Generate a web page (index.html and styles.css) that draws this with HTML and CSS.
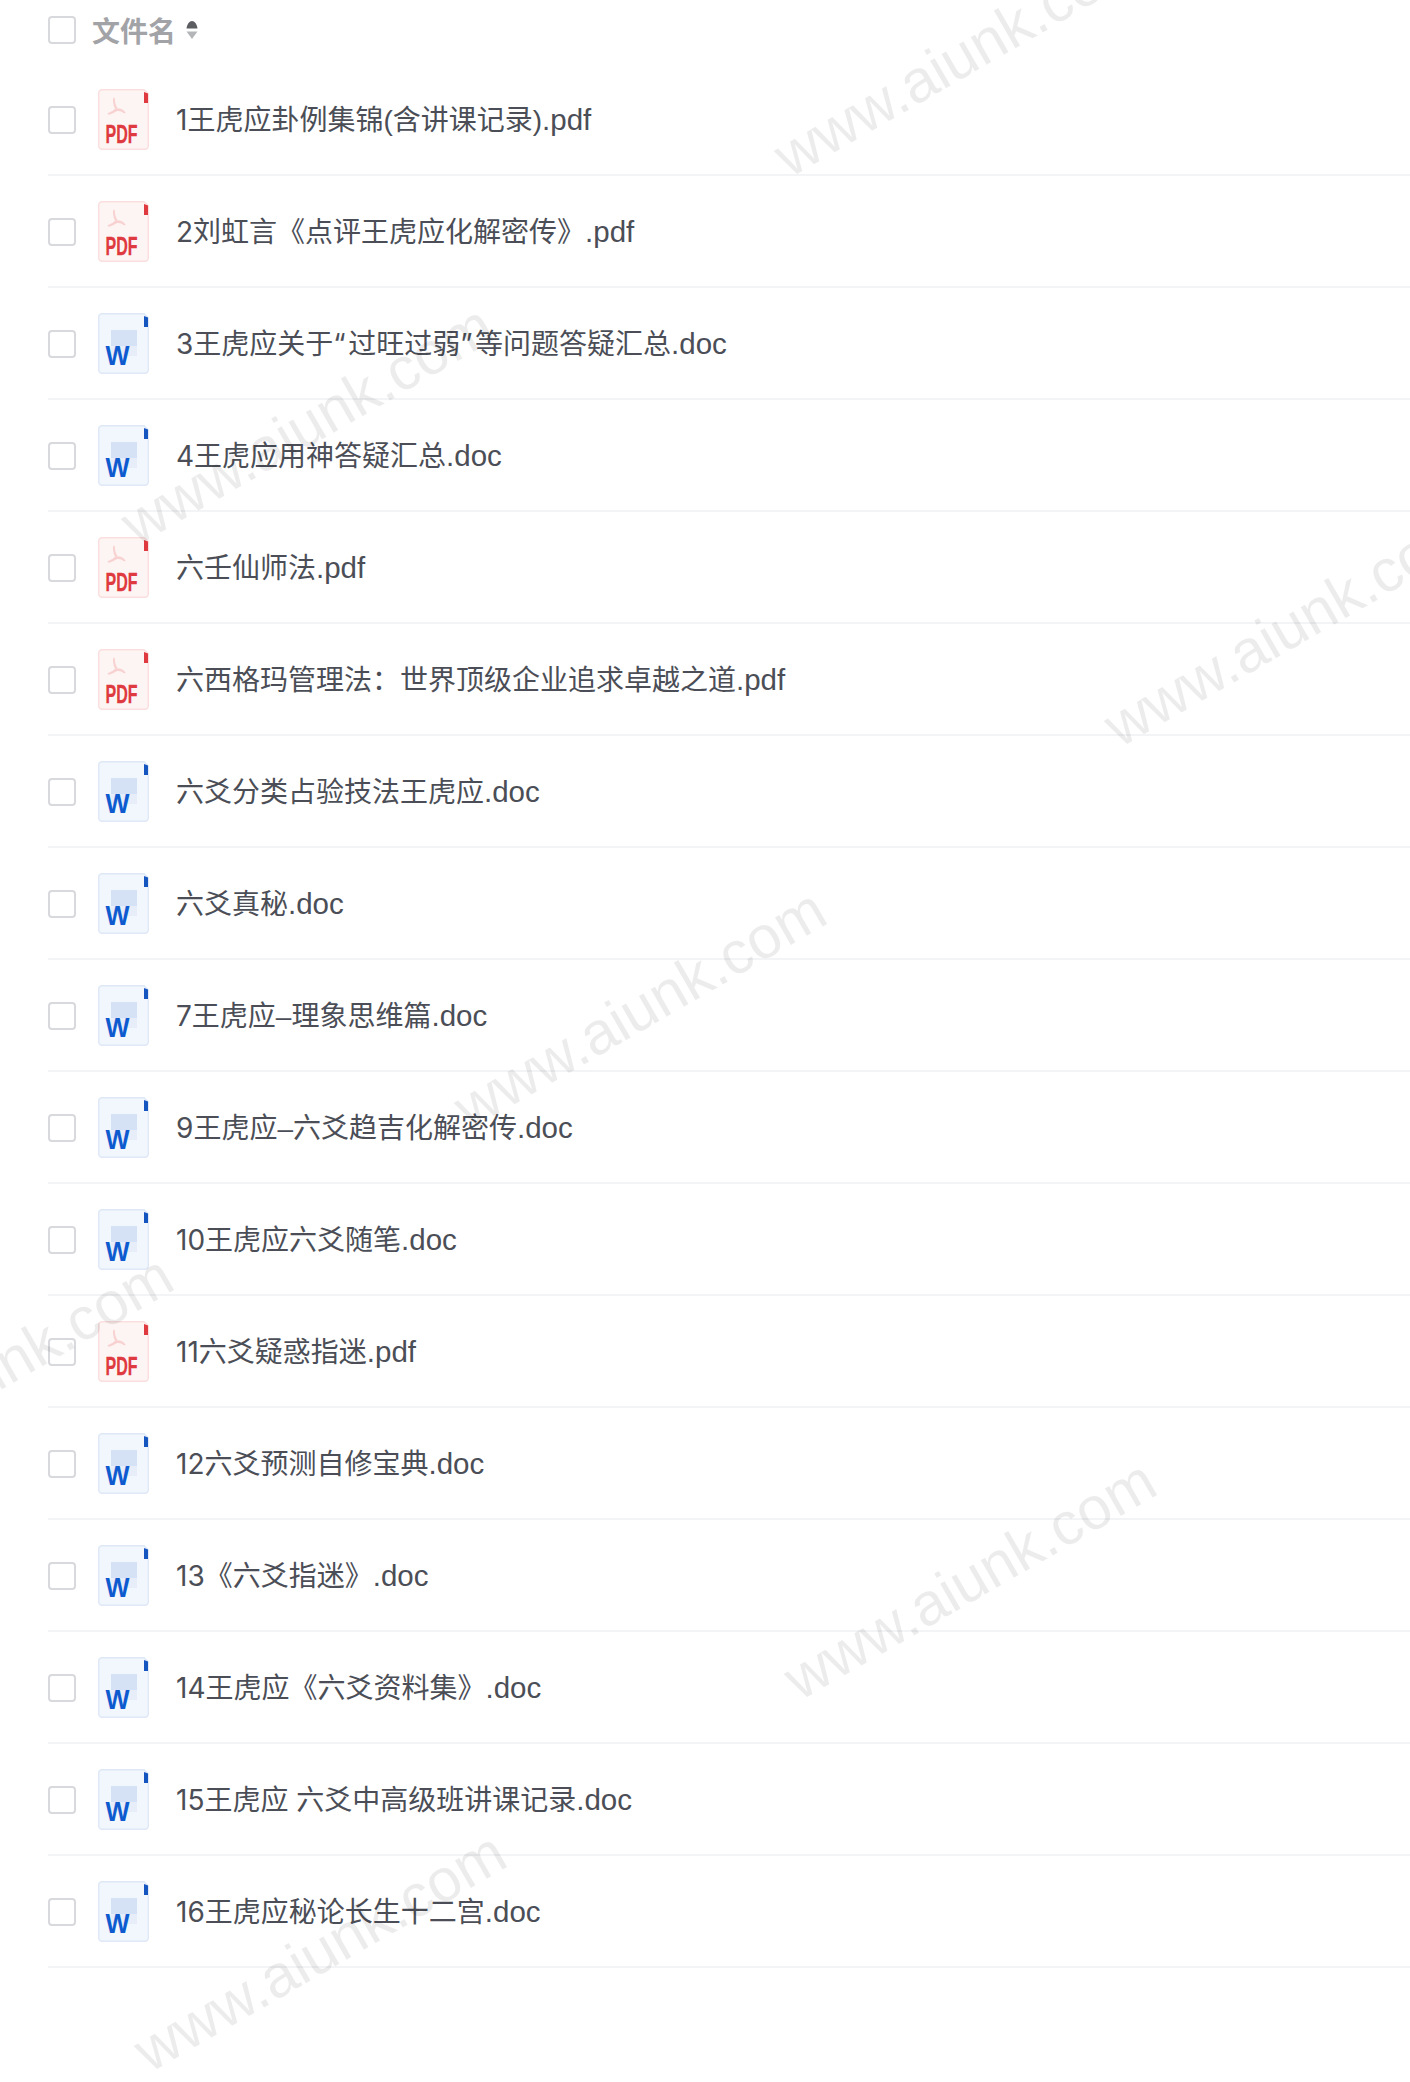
FILE: index.html

```html
<!DOCTYPE html>
<html lang="zh-CN">
<head>
  <meta charset="UTF-8" />
  <title>文件列表</title>
  <link rel="stylesheet" href="styles.css">
</head>
<body>
  <svg class="defs" width="0" height="0">
    <symbol id="icon-pdf" viewBox="0 0 51 61">
      <path d="M4 .7h42l4.300 4V57a3.300 3.300 0 0 1-3.300 3.300H4A3.300 3.300 0 0 1 .7 57V4A3.300 3.300 0 0 1 4 .7z" fill="#fdf4f4" stroke="#fbdedd" stroke-width="1.400"/>
      <path d="M46 3l4 1.500v9.500h-4z" fill="#df3a40"/>
      <path d="M16 9c-1 5 1 9 2 11-2 2-5 4-8 5 3 0 6-2 9-4 3 0 6 1 8 3-2-3-5-4-8-4-2-3-3-7-3-11z" fill="none" stroke="#f8d2d1" stroke-width="1.600"/>
      <text class="icon-pdf-text" x="23.500" y="54" textLength="32" lengthAdjust="spacingAndGlyphs" text-anchor="middle">PDF</text>
    </symbol>
    <symbol id="icon-doc" viewBox="0 0 51 61">
      <path d="M4 .7h42l4.300 4V57a3.300 3.300 0 0 1-3.300 3.300H4A3.300 3.300 0 0 1 .7 57V4A3.300 3.300 0 0 1 4 .7z" fill="#f2f6fd" stroke="#dfe8f6" stroke-width="1.400"/>
      <path d="M46 3l4 1.500v9.500h-4z" fill="#1455c0"/>
      <rect x="13" y="17" width="26" height="16" fill="#d5e1f5"/>
      <rect x="13" y="33" width="26" height="10" fill="#e8eef9"/>
      <text class="icon-doc-text" x="19.500" y="52" textLength="24" lengthAdjust="spacingAndGlyphs" text-anchor="middle">W</text>
    </symbol>
  </svg>

  <div class="list-head">
    <span class="check"></span>
    <span class="head-name">文件名</span>
    <svg class="sort" width="12" height="20" viewBox="0 0 12 20">
      <path d="M6 1C3.500 1 1 4 .5 8.500h11C11 4 8.500 1 6 1z" fill="#5c5d61"/>
      <path d="M.5 11.500h11L6 19z" fill="#b4b5b8"/>
    </svg>
  </div>

  <ul class="file-list">
    <li class="file-row"><span class="check"></span><svg class="file-icon"><use href="#icon-pdf"/></svg><span class="file-name"><span class="num">1</span>王虎应卦例集锦(含讲课记录)<span class="ext">.pdf</span></span></li>
    <li class="file-row"><span class="check"></span><svg class="file-icon"><use href="#icon-pdf"/></svg><span class="file-name"><span class="num">2</span>刘虹言《点评王虎应化解密传》<span class="ext">.pdf</span></span></li>
    <li class="file-row"><span class="check"></span><svg class="file-icon"><use href="#icon-doc"/></svg><span class="file-name"><span class="num">3</span>王虎应关于<span class="quote">“</span>过旺过弱<span class="quote">”</span>等问题答疑汇总<span class="ext">.doc</span></span></li>
    <li class="file-row"><span class="check"></span><svg class="file-icon"><use href="#icon-doc"/></svg><span class="file-name"><span class="num">4</span>王虎应用神答疑汇总<span class="ext">.doc</span></span></li>
    <li class="file-row"><span class="check"></span><svg class="file-icon"><use href="#icon-pdf"/></svg><span class="file-name">六壬仙师法<span class="ext">.pdf</span></span></li>
    <li class="file-row"><span class="check"></span><svg class="file-icon"><use href="#icon-pdf"/></svg><span class="file-name">六西格玛管理法：世界顶级企业追求卓越之道<span class="ext">.pdf</span></span></li>
    <li class="file-row"><span class="check"></span><svg class="file-icon"><use href="#icon-doc"/></svg><span class="file-name">六爻分类占验技法王虎应<span class="ext">.doc</span></span></li>
    <li class="file-row"><span class="check"></span><svg class="file-icon"><use href="#icon-doc"/></svg><span class="file-name">六爻真秘<span class="ext">.doc</span></span></li>
    <li class="file-row"><span class="check"></span><svg class="file-icon"><use href="#icon-doc"/></svg><span class="file-name"><span class="num">7</span>王虎应–理象思维篇<span class="ext">.doc</span></span></li>
    <li class="file-row"><span class="check"></span><svg class="file-icon"><use href="#icon-doc"/></svg><span class="file-name"><span class="num">9</span>王虎应–六爻趋吉化解密传<span class="ext">.doc</span></span></li>
    <li class="file-row"><span class="check"></span><svg class="file-icon"><use href="#icon-doc"/></svg><span class="file-name"><span class="num">10</span>王虎应六爻随笔<span class="ext">.doc</span></span></li>
    <li class="file-row"><span class="check"></span><svg class="file-icon"><use href="#icon-pdf"/></svg><span class="file-name"><span class="num">11</span>六爻疑惑指迷<span class="ext">.pdf</span></span></li>
    <li class="file-row"><span class="check"></span><svg class="file-icon"><use href="#icon-doc"/></svg><span class="file-name"><span class="num">12</span>六爻预测自修宝典<span class="ext">.doc</span></span></li>
    <li class="file-row"><span class="check"></span><svg class="file-icon"><use href="#icon-doc"/></svg><span class="file-name"><span class="num">13</span>《六爻指迷》<span class="ext">.doc</span></span></li>
    <li class="file-row"><span class="check"></span><svg class="file-icon"><use href="#icon-doc"/></svg><span class="file-name"><span class="num">14</span>王虎应《六爻资料集》<span class="ext">.doc</span></span></li>
    <li class="file-row"><span class="check"></span><svg class="file-icon"><use href="#icon-doc"/></svg><span class="file-name"><span class="num">15</span>王虎应 六爻中高级班讲课记录<span class="ext">.doc</span></span></li>
    <li class="file-row"><span class="check"></span><svg class="file-icon"><use href="#icon-doc"/></svg><span class="file-name"><span class="num">16</span>王虎应秘论长生十二宫<span class="ext">.doc</span></span></li>
  </ul>

  <div class="marks">
    <span class="mark m1">www.aiunk.com</span>
    <span class="mark m2">www.aiunk.com</span>
    <span class="mark m3">www.aiunk.com</span>
    <span class="mark m4">www.aiunk.com</span>
    <span class="mark m5">www.aiunk.com</span>
    <span class="mark m6">www.aiunk.com</span>
    <span class="mark m7">www.aiunk.com</span>
  </div>
</body>
</html>
```

FILE: styles.css

```css
html, body {
  margin: 0;
  padding: 0;
  background: #fff;
  font-family: "Liberation Sans", "Noto Sans CJK SC", sans-serif;
}
body {
  position: relative;
  width: 1410px;
  height: 2082px;
  overflow: hidden;
}
.defs {
  position: absolute;
}
.check {
  box-sizing: border-box;
  flex: none;
  width: 28px;
  height: 28px;
  border: 2px solid #d8d9dc;
  border-radius: 4px;
  background: #fff;
}
.list-head {
  display: flex;
  align-items: center;
  height: 60px;
  padding-left: 48px;
}
.head-name {
  margin-left: 16px;
  font-size: 28px;
  font-weight: 700;
  color: #a2a3a7;
}
.sort {
  margin-left: 10px;
}
.file-list {
  margin: 4px 0 0 48px;
  padding: 0;
  list-style: none;
}
.file-row {
  box-sizing: border-box;
  display: flex;
  align-items: center;
  height: 112px;
  border-bottom: 2px solid #f3f4f6;
}
.file-row .check {
  margin-top: 2px;
}
.file-icon {
  flex: none;
  width: 51px;
  height: 61px;
  margin-left: 22px;
}
.file-name {
  margin: 3px 0 0 27px;
  font-size: 28px;
  line-height: 40px;
  color: #4b4e56;
  white-space: pre;
}
.num {
  font-family: Inter, sans-serif;
}
.ext {
  font-size: 29.500px;
}
.quote {
  font-family: Inter, sans-serif;
  letter-spacing: 2.500px;
}
.icon-pdf-text {
  font-family: "Liberation Sans", sans-serif;
  font-size: 26px;
  font-weight: 700;
  fill: #df3a40;
  stroke: #df3a40;
  stroke-width: .3;
}
.icon-doc-text {
  font-family: "Liberation Sans", sans-serif;
  font-size: 27px;
  font-weight: 700;
  fill: #0e5bcf;
}
/* watermark sits over the list */
.marks {
  position: absolute;
  inset: 0;
  pointer-events: none;
}
.mark {
  position: absolute;
  width: 424px;
  margin: -35px 0 0 -212px;
  line-height: 70px;
  text-align: center;
  font-family: "Liberation Sans", sans-serif;
  font-size: 60px;
  color: rgba(0, 0, 0, 0.075);
  transform: rotate(-30deg);
  white-space: nowrap;
}
.m1 { left: 960px; top: 57px; }
.m2 { left: 307px; top: 425px; }
.m3 { left: 1290px; top: 627px; }
.m4 { left: 640px; top: 1009px; }
.m5 { left: -13px; top: 1375px; }
.m6 { left: 970px; top: 1580px; }
.m7 { left: 320px; top: 1952px; }
```
